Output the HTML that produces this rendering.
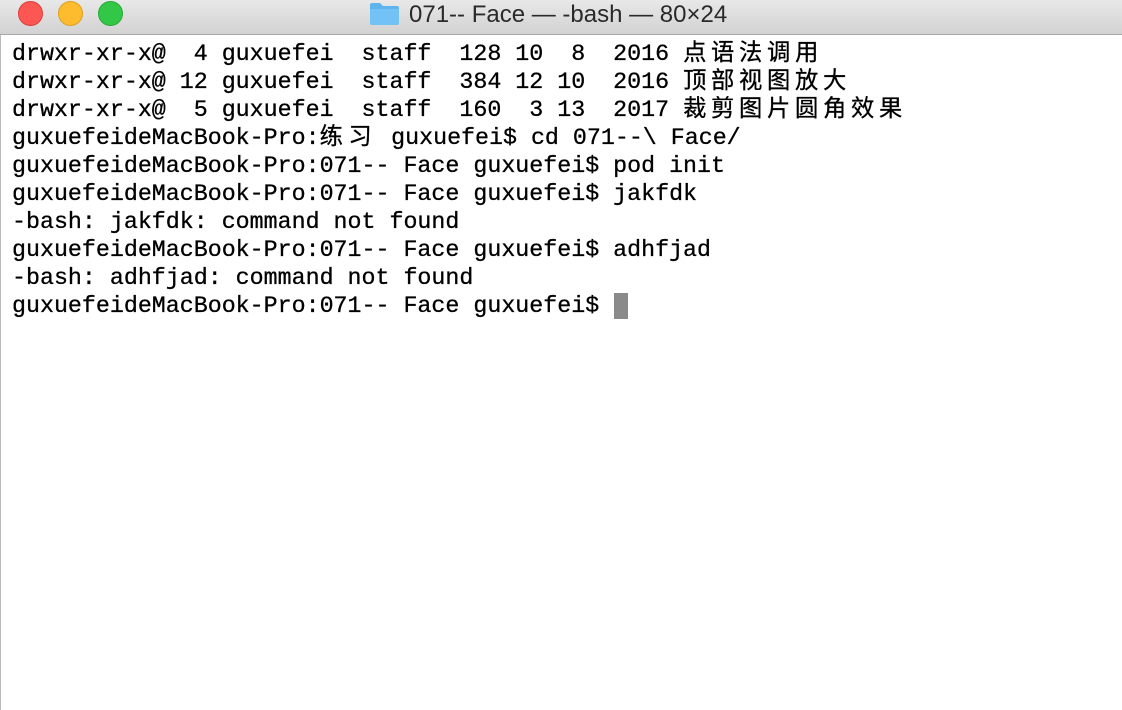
<!DOCTYPE html><html><head><meta charset="utf-8"><style>
body{margin:0;width:1122px;height:710px;overflow:hidden;background:#fff;position:relative}
.tb{position:absolute;left:0;top:0;width:1122px;height:34px;background:linear-gradient(#e9e8e9,#d3d2d3);border-bottom:1px solid #a8a8a8}
.b{position:absolute;top:1px;width:23px;height:23px;border-radius:50%}
.t{position:absolute;left:409px;top:0;font:24px "Liberation Sans",sans-serif;color:#2a2a2a;line-height:29px;white-space:nowrap}
pre{position:absolute;left:12px;top:40px;margin:0;font:23.3px/28px "Liberation Mono","Noto Sans CJK SC",monospace;color:#000;-webkit-text-stroke:0.3px #000}
pre span{letter-spacing:4.7px}
pre i{font-style:normal;letter-spacing:5.5px}
.c{position:absolute;left:614px;top:293px;width:14px;height:26px;background:#8a8a8a}
.lb{position:absolute;left:0;top:35px;width:1px;height:675px;background:#bbb}
</style></head><body>
<div class="tb">
<div class="b" style="left:18px;background:#fc5753;border:1px solid #df3d38"></div>
<div class="b" style="left:58px;background:#fdbc2e;border:1px solid #de9f1c"></div>
<div class="b" style="left:98px;background:#33c748;border:1px solid #27aa35"></div>
<svg style="position:absolute;left:369px;top:2px" width="31" height="23"><path d="M1 3 Q1 1 3 1 H11 L14 4 H28 Q30 4 30 6 V21 Q30 23 28 23 H3 Q1 23 1 21 Z" fill="#5fb4ee"/><path d="M1 7 H30 V21 Q30 23 28 23 H3 Q1 23 1 21Z" fill="#73c2f5"/></svg>
<div class="t">071-- Face — -bash — 80×24</div>
</div>
<div class="lb"></div>
<pre>drwxr-xr-x@  4 guxuefei  staff  128 10  8  2016 <span>点语法调用</span>
drwxr-xr-x@ 12 guxuefei  staff  384 12 10  2016 <span>顶部视图放大</span>
drwxr-xr-x@  5 guxuefei  staff  160  3 13  2017 <span>裁剪图片圆角效果</span>
guxuefeideMacBook-Pro:<i>练习</i> guxuefei$ cd 071--\ Face/
guxuefeideMacBook-Pro:071-- Face guxuefei$ pod init
guxuefeideMacBook-Pro:071-- Face guxuefei$ jakfdk
-bash: jakfdk: command not found
guxuefeideMacBook-Pro:071-- Face guxuefei$ adhfjad
-bash: adhfjad: command not found
guxuefeideMacBook-Pro:071-- Face guxuefei$ </pre>
<div class="c"></div>
</body></html>
